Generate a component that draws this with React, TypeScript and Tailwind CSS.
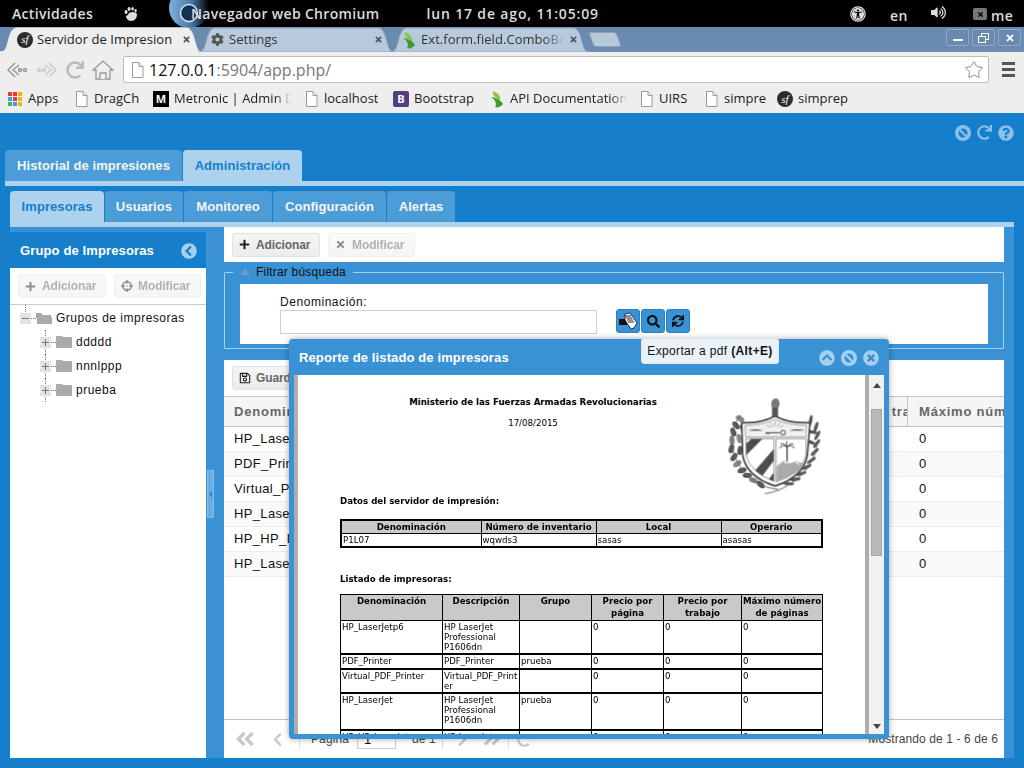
import React from "react";
import {
  FaPlus, FaTimes, FaSearch, FaSync, FaRegSave, FaAngleDoubleLeft, FaAngleDoubleRight, FaChevronLeft, FaChevronRight,
  FaChevronCircleLeft, FaChevronCircleUp, FaTimesCircle, FaQuestionCircle, FaRedo, FaCog, FaUniversalAccess,
  FaVolumeUp, FaCrosshairs,
} from "react-icons/fa";
import { Star } from "lucide-react";

const PageIcon = () => (
  <svg width="13" height="16" viewBox="0 0 13 16" className="shrink-0">
    <path d="M1.5.5h6.5l4 4v11h-10.5z" fill="#fff" stroke="#9a9a9a" />
    <path d="M8 .5v4h4" fill="#eee" stroke="#9a9a9a" />
  </svg>
);
const SfIcon = ({ s = 16 }: { s?: number }) => (
  <span style={{ width: s, height: s }} className="shrink-0 rounded-full bg-[#2b2b2b] text-white flex items-center justify-center font-['Liberation_Serif',serif] italic text-[11px] leading-none">sf</span>
);
const Leaf = () => (
  <svg width="16" height="18" viewBox="0 0 16 18" className="shrink-0">
    <path d="M4 1c5 2 8 5 7 9-3-1-8-4-7-9z" fill="#8cc63f" />
    <path d="M2 7c4 0 10 3 12 7-2 3-6 4-8 3 2-2 1-7-4-10z" fill="#3d9b35" />
  </svg>
);
const AppsIcon = () => (
  <svg width="14" height="14" viewBox="0 0 14 14" className="shrink-0">
    {[["#e33b2e","#e33b2e","#f4b400"],["#3d9be9","#e33b2e","#f4b400"],["#4caf50","#3d9be9","#f4b400"]].map((r,y)=>r.map((c,x)=>(
      <rect key={x+"-"+y} x={x*5} y={y*5} width="4" height="4" fill={c} />
    )))}
  </svg>
);

const BanIcon = ({ fill = "#a7d0ee", hole = "#3892d3" }: { fill?: string; hole?: string }) => (
  <svg width="16" height="16" viewBox="0 0 16 16" className="shrink-0">
    <circle cx="8" cy="8" r="8" fill={fill} />
    <circle cx="8" cy="8" r="4.500" fill={hole} />
    <path d="M4.500 4.500l7 7" stroke={fill} strokeWidth="2.200" />
  </svg>
);

function ChromeTab({ w, pl, label, icon, active, fade }: { w: number; pl: number; label: string; icon: React.ReactNode; active?: boolean; fade?: boolean }) {
  return (
    <div style={{ width: w, paddingLeft: pl }} className="relative h-[25px] -mr-[5px] flex items-center pr-[12px] gap-[4px] shrink-0">
      <svg className="absolute inset-0" width={w} height="25" preserveAspectRatio="none" viewBox={`0 0 ${w} 25`}>
        <path d={`M0 25c5 0 6-3 8-10 2-8 4-14 9-14h${w - 34}c5 0 7 6 9 14 2 7 3 10 8 10z`} fill={active ? "#eeeeee" : "#b9c9dc"} stroke={active ? "#eeeeee" : "#8ea4bf"} />
      </svg>
      <span className="relative flex items-center w-[16px] justify-center">{icon}</span>
      <span className={`relative flex-1 overflow-hidden whitespace-nowrap text-[13px] tracking-[0.05px] ${active ? "text-[#222]" : "text-[#333]"} ${fade ? "[mask-image:linear-gradient(to_right,black_85%,transparent)]" : ""}`}>{label}</span>
      <FaTimes className="relative text-[#555] shrink-0" size={9} />
    </div>
  );
}

function WinBtn({ children }: { children: React.ReactNode }) {
  return <div className="w-[23px] h-[17px] border border-[#8fa9c8] rounded-[2px] flex items-center justify-center text-white">{children}</div>;
}

function BM({ w, icon, label, clip }: { w: number; icon: React.ReactNode; label: string; clip?: number }) {
  return (
    <div style={{ width: w }} className="flex items-center gap-[5px] shrink-0 overflow-hidden">
      <span className="flex items-center justify-center w-[16px] shrink-0">{icon}</span>
      <span style={clip ? { width: clip } : undefined} className={`whitespace-nowrap overflow-hidden text-[13px] text-[#222] ${clip ? "[mask-image:linear-gradient(to_right,black_85%,transparent)]" : ""}`}>{label}</span>
    </div>
  );
}

function ExtBtn({ w, icon, label, disabled }: { w: number; icon: React.ReactNode; label: string; disabled?: boolean }) {
  return (
    <div style={{ width: w }} className={`h-[24px] rounded-[3px] border border-[#e0e0e0] bg-gradient-to-b from-[#f5f5f5] to-[#ececec] flex items-center pl-[5px] gap-[5px] overflow-hidden shrink-0 ${disabled ? "opacity-50" : ""}`}>
      <span className="text-[#222] w-[13px] flex justify-center shrink-0">{icon}</span>
      <span className="text-[12px] font-bold text-[#666] whitespace-nowrap tracking-[-0.1px]">{label}</span>
    </div>
  );
}

function ExtTab({ w, label, active }: { w: number; label: string; active?: boolean }) {
  return (
    <div style={{ width: w }} className={`h-[31px] rounded-t-[4px] flex items-center justify-center text-[13px] font-bold tracking-[0.08px] whitespace-nowrap ${active ? "bg-[#add2ed] text-[#157fcc]" : "bg-[#4b9cd7] text-[#f5f5f5]"}`}>
      {label}
    </div>
  );
}

function Tree({ label, root }: { label: string; root?: boolean }) {
  return (
    <div className={`relative h-[24px] flex items-center ${root ? "" : "pl-[20px]"}`}>
      {root
        ? <span className="absolute left-[15px] -top-[1px] h-[7px] border-l border-dotted border-[#777]" />
        : <span className="absolute left-[35px] top-0 h-[24px] border-l border-dotted border-[#777]" />}
      <span className="relative w-[11px] h-[11px] bg-[#e0e3e8] flex items-center justify-center ml-[10px] shrink-0">
        <span className="w-[7px] h-[1px] bg-[#777]" />
        {!root && <span className="absolute w-[1px] h-[7px] bg-[#777]" />}
      </span>
      <span className="w-[5px] border-t border-dotted border-[#777] shrink-0" />
      <svg width="16" height="12" viewBox="0 0 16 12" className="shrink-0">
        {root ? <path d="M0 1h5l2 2h8v2H2l-2 1zM1 5h15v7H1z" fill="#aaa" /> : <path d="M0 0h6l1 1h9v11H0z" fill="#aaa" />}
      </svg>
      <span className="ml-[4px] text-[12px] tracking-[0.5px] text-[#111] whitespace-nowrap">{label}</span>
    </div>
  );
}

const names = ["HP_LaserJetp6", "PDF_Printer", "Virtual_PDF_Printer", "HP_LaserJet", "HP_HP_LaserJet", "HP_LaserJet_2"];

function GridRow({ name, odd }: { name: string; odd: boolean }) {
  return (
    <div className={`h-[25px] shrink-0 flex items-center border-b border-[#ededed] text-[13px] text-[#111] ${odd ? "bg-[#fafafa]" : "bg-white"}`}>
      <span className="w-[685px] pl-[10px] shrink-0 overflow-hidden whitespace-nowrap tracking-[0.35px]">{name}</span>
      <span className="pl-[10px]">0</span>
    </div>
  );
}

const th = "border border-black bg-[#c9c9c9] font-bold text-center align-top p-0 leading-[12px]";
const tdBase = "border border-black border-b-2 align-top px-[1px] py-[1px] leading-[10px]";

function CoatOfArms() {
  const left = [[60,80],[48,100],[40,120],[36,145],[34,170],[42,195],[52,215],[66,235],[82,250],[100,265],[122,278],[70,110],[58,140],[60,175]];
  const right = [[272,85],[288,105],[292,130],[290,155],[284,180],[274,205],[260,225],[244,245],[226,262],[206,275],[276,120],[270,150]];
  return (
    <svg width="110" height="105" viewBox="0 0 330 315" className="shrink-0 -mt-[5px]">
      <defs>
        <filter id="soft" x="-5%" y="-5%" width="110%" height="110%"><feGaussianBlur stdDeviation="1.500" /></filter>
        <clipPath id="lf"><path d="M78 140H162V268Q90 240 78 190Z" /></clipPath>
      </defs>
      <g filter="url(#soft)">
        {left.map(([x, y], i) => <ellipse key={i} cx={x} cy={y} rx="14" ry="8" fill={i % 3 === 0 ? "#888" : "#555"} transform={`rotate(${i * 19 + 30} ${x} ${y})`} />)}
        {right.map(([x, y], i) => <ellipse key={i} cx={x} cy={y} rx="5" ry="16" fill="#555" transform={`rotate(${i * 9 + 10} ${x} ${y})`} />)}
        <path d="M175 292C100 285 50 230 38 170S50 90 62 68" fill="none" stroke="#666" strokeWidth="3" />
        <path d="M135 305C210 295 285 230 292 150" fill="none" stroke="#666" strokeWidth="3" />
        <path d="M155 45c-4-15 2-26 12-26s14 12 10 26z" fill="#777" />
        <rect x="156" y="45" width="18" height="28" fill="#555" />
        <path d="M65 92Q120 95 165 72Q210 95 270 92L262 190Q250 255 165 282Q80 255 68 190Z" fill="#fff" stroke="#444" strokeWidth="5" />
        <path d="M75 100Q125 100 165 82Q205 100 260 100L258 135H77Z" fill="#f0f0f0" stroke="#777" strokeWidth="2" />
        <path d="M85 116q20-8 45 0zM208 116q22-8 48 0z" fill="#444" />
        <path d="M165 88v14M150 92l8 12M180 92l-8 12M140 100l12 6M190 100l-12 6" stroke="#888" strokeWidth="2" />
        <path d="M137 122h42M140 122v5M146 122v5" stroke="#444" strokeWidth="3" />
        <circle cx="189" cy="122" r="7" fill="none" stroke="#444" strokeWidth="3" />
        <path d="M78 140H162V268Q90 240 78 190Z" fill="#fff" stroke="#666" strokeWidth="2" />
        <g clipPath="url(#lf)">
          <path d="M78 190L128 140H95L78 155Z" fill="#4d4d4d" />
          <path d="M100 242L162 170V205L122 258Z" fill="#4d4d4d" />
          <path d="M146 262L162 240V280H140Z" fill="#4d4d4d" />
        </g>
        <path d="M168 140H258V190Q245 245 168 270Z" fill="#fff" stroke="#666" strokeWidth="2" />
        <path d="M201 165V208" stroke="#444" strokeWidth="4" />
        <path d="M201 165q-14-10-22 4M201 165q-10-14-20-8M201 165q14-10 22 4M201 165q10-14 20-8M201 165q-4-12 0-18" fill="none" stroke="#444" strokeWidth="3" />
        <path d="M170 222l22-16 16 8 20-6 24 6q-10 30-82 54z" fill="#aaa" />
        <path d="M190 212l6-4 8 10zM225 212l8-2 8 10z" fill="#eee" />
      </g>
    </svg>
  );
}

function PdfPage() {
  return (
    <div className="flex-1 bg-white overflow-hidden pl-[42px] pt-[22px] font-['DejaVu_Sans',sans-serif] text-[8.65px] text-black">
      <div className="w-[490px] h-[99px] flex">
        <div className="w-[380px] pl-[6px] text-center">
          <div className="font-bold leading-[11px]">Ministerio de las Fuerzas Armadas Revolucionarias</div>
          <div className="mt-[10px] leading-[11px]">17/08/2015</div>
        </div>
        <CoatOfArms />
      </div>
      <div className="font-bold leading-[11px]">Datos del servidor de impresión:</div>
      <table className="mt-[12px] w-[483px] table-fixed border-collapse border-2 border-black">
        <colgroup><col className="w-[140px]" /><col className="w-[115px]" /><col className="w-[125px]" /><col /></colgroup>
        <tbody>
          <tr className="h-[13px]"><th className={th}>Denominación</th><th className={th}>Número de inventario</th><th className={th}>Local</th><th className={th}>Operario</th></tr>
          <tr className="h-[13px]"><td className={tdBase}>P1L07</td><td className={tdBase}>wqwds3</td><td className={tdBase}>sasas</td><td className={tdBase}>asasas</td></tr>
        </tbody>
      </table>
      <div className="font-bold leading-[11px] mt-[26px]">Listado de impresoras:</div>
      <table className="mt-[9px] w-[483px] table-fixed border-collapse border border-[#333]">
        <colgroup><col className="w-[102px]" /><col className="w-[77px]" /><col className="w-[72px]" /><col className="w-[72px]" /><col className="w-[78px]" /><col /></colgroup>
        <tbody>
          <tr className="h-[26px]">
            <th className={th}>Denominación</th><th className={th}>Descripción</th><th className={th}>Grupo</th><th className={th}>Precio por página</th><th className={th}>Precio por trabajo</th><th className={th}>Máximo número de páginas</th>
          </tr>
          {[
            ["HP_LaserJetp6", "HP LaserJet Professional P1606dn", "", 33],
            ["PDF_Printer", "PDF_Printer", "prueba", 15],
            ["Virtual_PDF_Printer", "Virtual_PDF_Printer", "", 24],
            ["HP_LaserJet", "HP LaserJet Professional P1606dn", "prueba", 37],
            ["HP_HP_LaserJet", "HP LaserJet Professional P1606dn", "", 36],
          ].map((r, i) => (
            <tr key={i} style={{ height: r[3] as number }}>
              <td className={tdBase}>{r[0]}</td><td className={`${tdBase} ${i === 2 ? "break-all" : ""}`}>{r[1]}</td><td className={tdBase}>{r[2]}</td><td className={tdBase}>0</td><td className={tdBase}>0</td><td className={tdBase}>0</td>
            </tr>
          ))}
        </tbody>
      </table>
    </div>
  );
}

function ReportWindow() {
  return (
    <div className="absolute left-[289px] top-[339px] w-[600px] h-[400px] bg-[#3892d3] rounded-[4px] shadow-[0_0_6px_rgba(0,0,0,0.35)] flex flex-col px-[5px] pb-[5px]">
      <div className="h-[36px] shrink-0 flex items-center pl-[5px] pr-[5px] pt-[1px] text-white">
        <span className="text-[13px] font-bold tracking-[0.12px]">Reporte de listado de impresoras</span>
        <span className="ml-auto flex gap-[6px] text-[#a7d0ee]">
          <FaChevronCircleUp size={16} /><BanIcon /><FaTimesCircle size={16} />
        </span>
      </div>
      <div className="flex-1 flex min-h-0 overflow-hidden">
        <div className="w-[4px] bg-[#aeaeae] shrink-0" />
        <PdfPage />
        <div className="w-[4px] bg-[#aeaeae] shrink-0" />
        <div className="w-[15px] bg-[#f1f1f1] shrink-0 flex flex-col items-center">
          <svg width="8" height="5" viewBox="0 0 8 5" className="mt-[8px]"><path d="M4 0l4 5H0z" fill="#444" /></svg>
          <div className="mt-[21px] w-[11px] h-[147px] bg-[#b8b8b8] border border-[#a6a6a6]" />
          <svg width="8" height="5" viewBox="0 0 8 5" className="mt-auto mb-[5px]"><path d="M4 5L8 0H0z" fill="#444" /></svg>
        </div>
      </div>
    </div>
  );
}

function SquareBtn({ children }: { children: React.ReactNode }) {
  return <div className="relative w-[24px] h-[24px] rounded-[3px] bg-[#3892d3] border border-[#2a7fc0] flex items-center justify-center text-[#0b0b0b]">{children}</div>;
}

const Sep = () => <span className="block w-px h-[20px] bg-[#ddd] shrink-0" />;

export default function App() {
  return (
    <div className="relative w-[1024px] h-[768px] overflow-hidden flex flex-col font-['Liberation_Sans',sans-serif]">
      <div className="relative h-[27px] shrink-0 bg-black text-[#ddd] flex items-center text-[14px] tracking-[0.33px] font-['Open_Sans',sans-serif] font-semibold whitespace-nowrap">
        <span className="pl-[12px] w-[124px]">Actividades</span>
        <svg width="14" height="16" viewBox="0 0 14 16" className="shrink-0"><path d="M5 7c3-2 7-1 8 1 0 4-2 7-6 7-3 0-5-3-5-5 1 0 2-1 3-3zM2 4a1.5 2 0 1 0 .1 0M5 1a1.5 2 0 1 0 .1 0M8.500 1a1.300 1.800 0 1 0 .1 0M11.500 3a1.200 1.600 0 1 0 .1 0" fill="#ddd" /></svg>
        <svg width="42" height="27" viewBox="0 0 42 27" className="absolute left-[169px] top-0">
          <defs><linearGradient id="ch" x1="0" x2="1"><stop offset="0" stopColor="#7fb0dc" /><stop offset="0.55" stopColor="#4a78a8" /><stop offset="1" stopColor="#000" /></linearGradient></defs>
          <circle cx="20" cy="8" r="20" fill="url(#ch)" />
          <circle cx="20" cy="13" r="8.500" fill="#12304f" stroke="#d9e6f2" strokeWidth="1.500" />
        </svg>
        <span className="ml-[53px] relative">Navegador web Chromium</span>
        <span className="ml-[47px] tracking-[0.85px]">lun 17 de ago, 11:05:09</span>
        <span className="absolute left-[850px] top-[6px]"><FaUniversalAccess size={16} /></span>
        <span className="absolute left-[890px] top-[5px]">en</span>
        <span className="absolute left-[931px] top-[5px]"><FaVolumeUp size={15} /></span>
        <span className="absolute left-[973px] top-[8px] w-[14px] h-[12px] bg-[#777] rounded-[2px] text-black flex items-center justify-center"><FaTimes size={7} /></span>
        <span className="absolute left-[991px] top-[5px]">me</span>
      </div>
      <div className="h-[25px] shrink-0 bg-[#6b8ab0] flex items-end pl-0 font-['Open_Sans',sans-serif] relative">
        <ChromeTab w={203} pl={17} active label="Servidor de Impresion" icon={<SfIcon />} />
        <ChromeTab w={197} pl={11} label="Settings" icon={<FaCog className="text-[#555]" size={13} />} />
        <ChromeTab w={200} pl={11} fade label="Ext.form.field.ComboBox" icon={<Leaf />} />
        <div className="ml-[6px] w-[28px] h-[15px] mb-[5px] skew-x-[20deg] bg-[#b9c9dc] border border-[#8ea4bf] rounded-[3px]" />
        <div className="ml-auto mr-[3px] mb-[6px] flex gap-[3px]">
          <WinBtn><span className="w-[10px] h-[2px] bg-white mt-[5px]" /></WinBtn>
          <WinBtn>
            <svg width="11" height="10" viewBox="0 0 11 10" fill="none" stroke="#fff"><rect x="3.500" y=".5" width="7" height="6" /><rect x=".5" y="3.500" width="7" height="6" fill="#6b8ab0" /></svg>
          </WinBtn>
          <WinBtn><FaTimes size={10} /></WinBtn>
        </div>
      </div>
      <div className="h-[35px] shrink-0 bg-[#eeeeee] flex items-center pl-[6px] pr-[6px]">
        <div className="flex items-center gap-[8px] w-[117px] text-[#aaa]">
          <svg width="22" height="18" viewBox="0 0 22 18" fill="none" stroke="#999" strokeWidth="1.500"><path d="M9 2L2 9l7 7" /><path d="M13 4l-6 5 6 5" /><circle cx="14" cy="9" r="1.500" /><circle cx="19" cy="9" r="1.500" /></svg>
          <svg width="22" height="18" viewBox="0 0 22 18" fill="none" stroke="#ccc" strokeWidth="1.500"><path d="M13 2l7 7-7 7" /><path d="M9 4l6 5-6 5" /><circle cx="8" cy="9" r="1.500" /><circle cx="3" cy="9" r="1.500" /></svg>
          <FaRedo size={18} className="text-[#bbb]" />
          <svg width="22" height="20" viewBox="0 0 22 20" fill="#eee" stroke="#999" strokeWidth="1.300"><path d="M1 10L11 1l10 9h-3v9H4v-9z" /><path d="M8 19v-6h6v6" /></svg>
        </div>
        <div className="w-[866px] h-[27px] bg-white border border-[#bdbdbd] rounded-[2px] flex items-center pl-[7px] pr-[4px] text-[16px] ml-0">
          <PageIcon />
          <span className="ml-[5px] text-[#111] font-['Open_Sans',sans-serif]">127.0.0.1<span className="text-[#777]">:5904/app.php/</span></span>
          <Star className="ml-auto text-[#777]" size={20} strokeWidth={1} />
        </div>
        <div className="ml-[13px] flex flex-col gap-[3px]">
          <span className="w-[13px] h-[3px] bg-[#555]" /><span className="w-[13px] h-[3px] bg-[#555]" /><span className="w-[13px] h-[3px] bg-[#555]" />
        </div>
      </div>
      <div className="h-[26px] shrink-0 bg-[#eeeeee] flex items-center pl-[7px] pb-[2px] font-['Open_Sans',sans-serif]">
        <BM w={66} icon={<AppsIcon />} label="Apps" />
        <BM w={80} icon={<PageIcon />} label="DragCh" />
        <BM w={150} clip={118} icon={<span className="w-[16px] h-[16px] bg-black text-white text-[11px] font-bold flex items-center justify-center">M</span>} label="Metronic | Admin Dashboard" />
        <BM w={90} icon={<PageIcon />} label="localhost" />
        <BM w={96} icon={<span className="w-[16px] h-[16px] rounded-[2px] bg-[#563d7c] text-white text-[11px] font-bold flex items-center justify-center">B</span>} label="Bootstrap" />
        <BM w={149} clip={118} icon={<Leaf />} label="API Documentation" />
        <BM w={65} icon={<PageIcon />} label="UIRS" />
        <BM w={74} icon={<PageIcon />} label="simpre" />
        <BM w={80} icon={<SfIcon />} label="simprep" />
      </div>
      <div className="flex-1 bg-[#157fcc] flex flex-col min-h-0">
        <div className="h-[37px] shrink-0 flex items-center justify-end pr-[10px] gap-[6px] text-[#8dc0e6] pt-[2px]">
          <BanIcon fill="#8dc0e6" hole="#157fcc" /><FaRedo size={15} /><FaQuestionCircle size={16} />
        </div>
        <div className="h-[31px] shrink-0 flex gap-px pl-[5px]">
          <ExtTab w={177} label="Historial de impresiones" />
          <ExtTab w={119} active label="Administración" />
        </div>
        <div className="h-[5px] shrink-0 ml-[5px] bg-[#add2ed]" />
        <div className="flex-1 ml-[5px] mr-[10px] mb-[10px] pl-[5px] pt-[5px] flex flex-col min-h-0 rounded-tl-[4px] bg-[#157fcc]">
          <div className="h-[31px] shrink-0 flex gap-px">
            <ExtTab w={94} active label="Impresoras" />
            <ExtTab w={78} label="Usuarios" />
            <ExtTab w={88} label="Monitoreo" />
            <ExtTab w={113} label="Configuración" />
            <ExtTab w={68} label="Alertas" />
          </div>
          <div className="h-[5px] shrink-0 bg-[#add2ed]" />
          <div className="flex-1 flex bg-[#3892d3] min-h-0">
            <div className="w-[196px] mt-[5px] bg-white flex flex-col shrink-0">
              <div className="h-[36px] bg-[#157fcc] flex items-center pl-[10px] pr-[9px] pt-[1px] text-white shrink-0">
                <span className="text-[13px] font-bold tracking-[0.13px]">Grupo de Impresoras</span>
                <FaChevronCircleLeft className="ml-auto text-[#a7d0ee]" size={16} />
              </div>
              <div className="h-[37px] border-b border-[#ccc] flex items-center pl-[8px] gap-[8px] shrink-0">
                <ExtBtn w={88} disabled icon={<FaPlus size={11} />} label="Adicionar" />
                <ExtBtn w={87} disabled icon={<FaCrosshairs size={12} />} label="Modificar" />
              </div>
              <div className="pt-[1px]">
                <Tree root label="Grupos de impresoras" />
                <Tree label="ddddd" />
                <Tree label="nnnlppp" />
                <Tree label="prueba" />
              </div>
            </div>
            <div className="w-[18px] shrink-0 flex items-center">
              <div className="ml-[1px] mt-[2px] w-[7px] h-[48px] bg-[#6aade0] border border-[#84bce6] flex items-center justify-center">
                <span className="w-0 h-0 border-y-[4px] border-y-transparent border-r-[3px] border-r-[#2b86cc]" />
              </div>
            </div>
            <div className="w-[780px] shrink-0 flex flex-col min-h-0">
              <div className="h-[35px] bg-white flex items-center pl-[8px] gap-[8px] shrink-0">
                <ExtBtn w={88} icon={<FaPlus size={11} />} label="Adicionar" />
                <ExtBtn w={87} disabled icon={<FaTimes size={11} />} label="Modificar" />
              </div>
              <div className="h-[98px] pt-[10px] shrink-0">
                <div className="relative h-[77px] border border-[#a9cfeb] pt-[11px] px-[15px] rounded-[1px]">
                  <div className="absolute left-[8px] -top-[9px] h-[15px] bg-[#3892d3] flex items-center gap-[6px] px-[7px] text-[12px] text-[#111] tracking-[0.2px]">
                    <span className="w-0 h-0 border-x-[5px] border-x-transparent border-b-[7px] border-b-[#6d9dc4]" />
                    Filtrar búsqueda
                  </div>
                  <div className="h-[60px] bg-white pl-[40px] pt-[10px] text-[12px] text-[#111] tracking-[0.55px]">
                    <div className="leading-[16px]">Denominación:</div>
                    <div className="flex items-start">
                      <div className="w-[317px] h-[24px] border border-[#cfcfcf] bg-white" />
                      <div className="ml-[19px] flex gap-px -mt-px">
                        <SquareBtn>
                          <svg width="20" height="18" viewBox="0 0 20 18">
                            <path d="M1 7h8v6H1z" fill="#111" />
                            <path d="M7 2l5-1 7 10-3 5-3 1-6-9z" fill="#fff" stroke="#111" strokeWidth="0.800" />
                            <path d="M7 4h6M8 6h6M9 8h6M10 10h6" stroke="#111" strokeWidth="0.900" />
                          </svg>
                        </SquareBtn>
                        <SquareBtn><FaSearch size={13} /></SquareBtn>
                        <SquareBtn><FaSync size={12} /></SquareBtn>
                      </div>
                    </div>
                  </div>
                </div>
              </div>
              <div className="flex-1 bg-white flex flex-col min-h-0">
                <div className="h-[37px] shrink-0 border-b border-[#c4c4c4] flex items-center pl-[8px]">
                  <ExtBtn w={100} icon={<FaRegSave size={12} />} label="Guardar" />
                </div>
                <div className="h-[30px] shrink-0 bg-[#f5f5f5] border-b border-[#c4c4c4] flex items-center text-[13px] font-bold text-[#666] tracking-[0.8px] whitespace-nowrap overflow-hidden">
                  <span className="w-[591px] pl-[10px] shrink-0">Denominación</span>
                  <span className="w-[93px] h-full flex items-center overflow-hidden shrink-0 border-r border-[#c4c4c4]">Precio por trabajo</span>
                  <span className="pl-[11px]">Máximo número de páginas</span>
                </div>
                {names.map((n, i) => <GridRow key={i} name={n} odd={i % 2 === 1} />)}
                <div className="mt-auto h-[39px] shrink-0 border-t border-[#c4c4c4] flex items-center pl-[10px] pr-[6px] text-[12px] text-[#444] tracking-[0.1px] whitespace-nowrap">
                  <FaAngleDoubleLeft size={22} className="text-[#c8c8c8]" />
                  <FaChevronLeft size={15} className="ml-[14px] text-[#c8c8c8]" />
                  <span className="ml-[14px]"><Sep /></span>
                  <span className="ml-[11px]">Página</span>
                  <span className="ml-[8px] w-[39px] h-[20px] border border-[#ccc] pl-[6px] text-[#111] text-[13px]">1</span>
                  <span className="ml-[16px]">de 1</span>
                  <span className="ml-[6px]"><Sep /></span>
                  <FaChevronRight size={15} className="ml-[12px] text-[#c8c8c8]" />
                  <FaAngleDoubleRight size={20} className="ml-[12px] text-[#c8c8c8]" />
                  <span className="ml-[6px]"><Sep /></span>
                  <FaRedo size={15} className="ml-[8px] text-[#c8c8c8]" />
                  <span className="ml-auto">Mostrando de 1 - 6 de 6</span>
                </div>
              </div>
            </div>
          </div>
        </div>
      </div>
      <ReportWindow />
      <div className="absolute left-[641px] top-[338px] w-[138px] h-[26px] bg-[#eaf2f9] border border-[#dde8f1] rounded-[3px] flex items-center justify-center text-[12px] text-[#111] tracking-[0.35px] whitespace-nowrap">
        Exportar a pdf&nbsp;<b>(Alt+E)</b>
      </div>
    </div>
  );
}
